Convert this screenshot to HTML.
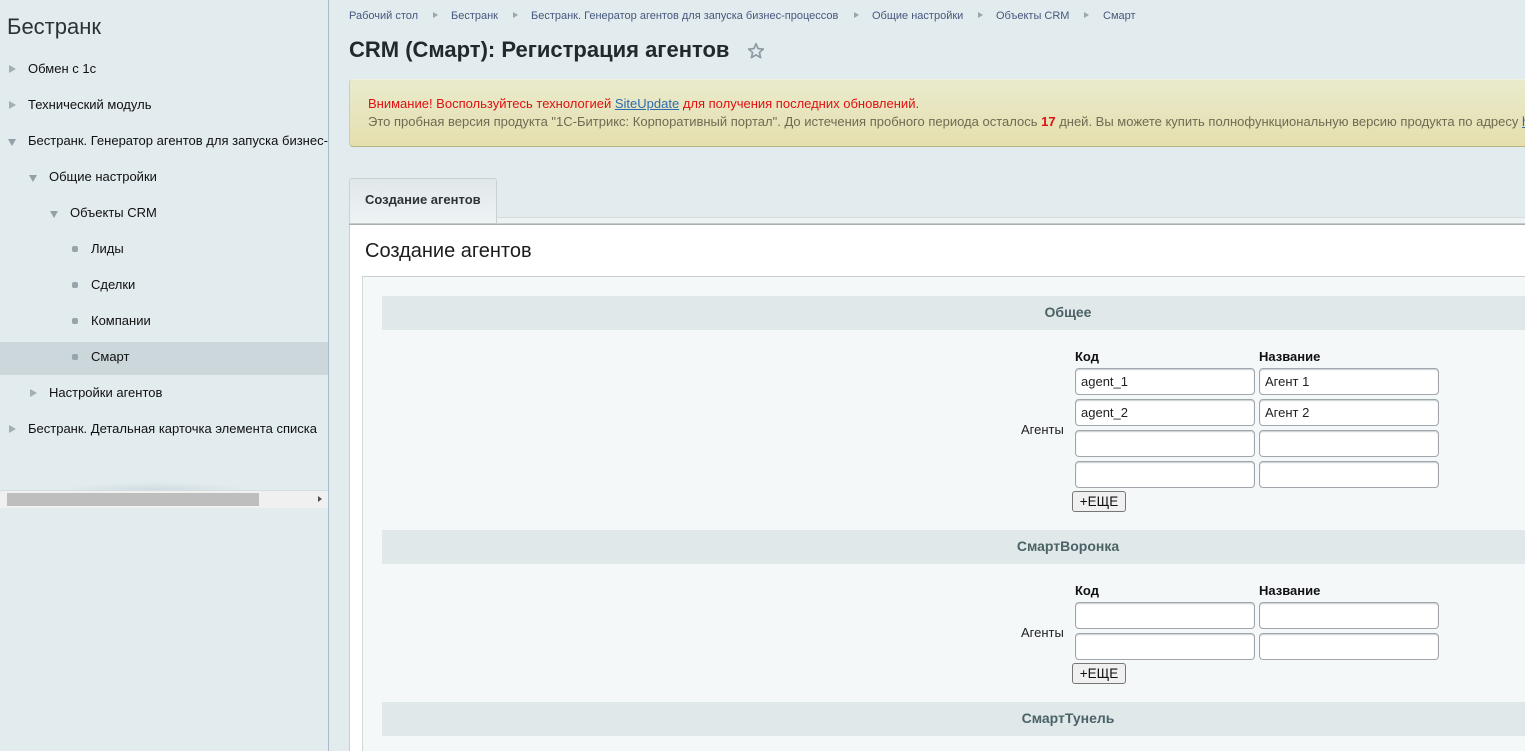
<!DOCTYPE html>
<html lang="ru"><head><meta charset="utf-8"><title>CRM (Смарт): Регистрация агентов</title>
<style>
html,body{margin:0;padding:0;width:1525px;height:751px;overflow:hidden;background:#e2ebee;font-family:"Liberation Sans","Noto Sans CJK SC",sans-serif;color:#000}
.a{position:absolute;white-space:nowrap}
#root{position:relative;width:1525px;height:751px;overflow:hidden}
.m{font-size:13px;line-height:16px;color:#111}
.tr{position:absolute;width:0;height:0;border-left:7px solid #a3afb6;border-top:4px solid transparent;border-bottom:4px solid transparent}
.td{position:absolute;width:0;height:0;border-top:7px solid #93a0a8;border-left:4.5px solid transparent;border-right:4.5px solid transparent}
.dot{position:absolute;width:6px;height:6px;border-radius:2px;background:#98a4ac}
.bc{font-size:11px;line-height:14px;color:#46587e;top:9px}
.sep{position:absolute;top:12px;width:0;height:0;border-left:5px solid #9aa7af;border-top:3.5px solid transparent;border-bottom:3.5px solid transparent}
.band{position:absolute;left:382px;width:1143px;height:34px;background:#e0e8e9;text-align:center;font-size:14px;font-weight:bold;line-height:33px;color:#4b6267}
.band span{position:absolute;left:0;width:1372px}
.in{position:absolute;box-sizing:border-box;width:180px;height:27px;background:#fff;border:1px solid #a0a6ab;border-radius:4px;box-shadow:inset 0 1px 1px #c8ced2;font-size:13px;line-height:25px;padding-left:5px;color:#222;white-space:nowrap}
.c1{left:1075px}.c2{left:1259px}
.h{font-size:13px;font-weight:bold;line-height:16px;color:#111}
.lb{font-size:13px;line-height:16px;color:#222}
.btn{position:absolute;box-sizing:border-box;left:1072px;width:54px;height:21px;background:#f0f0f0;border:1px solid #767676;border-radius:3px;font-size:13.5px;line-height:19px;text-align:center;color:#111}
</style></head><body><div id="root">

<div class="a" style="left:0;top:0;width:328px;height:751px;background:#e2ebee"></div>
<div class="a" style="left:328px;top:0;width:1px;height:751px;background:#a9bbc9"></div>
<div class="a" style="left:7px;top:14px;font-size:22px;line-height:26px;color:#2c3338">Бестранк</div>

<div class="tr" style="left:9px;top:65px"></div><div class="a m" style="left:28px;top:61px">Обмен с 1с</div>
<div class="tr" style="left:9px;top:101px"></div><div class="a m" style="left:28px;top:97px">Технический модуль</div>
<div class="td" style="left:8px;top:139px"></div><div class="a m" style="left:28px;top:133px;width:300px;overflow:hidden">Бестранк. Генератор агентов для запуска бизнес-процессов</div>
<div class="td" style="left:29px;top:175px"></div><div class="a m" style="left:49px;top:169px">Общие настройки</div>
<div class="td" style="left:50px;top:211px"></div><div class="a m" style="left:70px;top:205px">Объекты CRM</div>
<div class="dot" style="left:72px;top:246px"></div><div class="a m" style="left:91px;top:241px">Лиды</div>
<div class="dot" style="left:72px;top:282px"></div><div class="a m" style="left:91px;top:277px">Сделки</div>
<div class="dot" style="left:72px;top:318px"></div><div class="a m" style="left:91px;top:313px">Компании</div>
<div class="a" style="left:0;top:342px;width:328px;height:33px;background:#cbd7db"></div>
<div class="dot" style="left:72px;top:354px"></div><div class="a m" style="left:91px;top:349px">Смарт</div>
<div class="tr" style="left:30px;top:389px"></div><div class="a m" style="left:49px;top:385px">Настройки агентов</div>
<div class="tr" style="left:9px;top:425px"></div><div class="a m" style="left:28px;top:421px">Бестранк. Детальная карточка элемента списка</div>

<div class="a" style="left:60px;top:482px;width:190px;height:8px;background:radial-gradient(ellipse at 50% 100%,#d0dce3 0,rgba(208,220,227,0) 70%)"></div>
<div class="a" style="left:0;top:490px;width:328px;height:18px;background:#f0f0f0;border-top:1px solid #d5dde1;box-sizing:border-box"></div>
<div class="a" style="left:7px;top:493px;width:252px;height:13px;background:#bebebe"></div>
<div class="a" style="left:318px;top:496px;width:0;height:0;border-left:4px solid #505050;border-top:3.5px solid transparent;border-bottom:3.5px solid transparent"></div>

<div class="a bc" style="left:349px">Рабочий стол</div><div class="sep" style="left:433px"></div>
<div class="a bc" style="left:451px">Бестранк</div><div class="sep" style="left:513px"></div>
<div class="a bc" style="left:531px">Бестранк. Генератор агентов для запуска бизнес-процессов</div><div class="sep" style="left:854px"></div>
<div class="a bc" style="left:872px">Общие настройки</div><div class="sep" style="left:978px"></div>
<div class="a bc" style="left:996px">Объекты CRM</div><div class="sep" style="left:1084px"></div>
<div class="a bc" style="left:1103px">Смарт</div>

<div class="a" style="left:349px;top:37px;font-size:22px;font-weight:bold;line-height:26px;color:#20292e">CRM (Смарт): Регистрация агентов</div>
<svg class="a" style="left:747px;top:42px" width="18" height="18" viewBox="0 0 18 18"><path d="M9 1.8l2.1 4.8 5.2.5-3.9 3.4 1.2 5.1L9 12.9l-4.6 2.7 1.2-5.1-3.9-3.4 5.2-.5z" fill="none" stroke="#8d9ba5" stroke-width="1.7" stroke-linejoin="round"/></svg>

<div class="a" style="left:349px;top:79px;width:1190px;height:68px;box-sizing:border-box;background:linear-gradient(#e9ebcd,#e5dfae);border:1px solid #cfcdaa;border-top-color:#f0f0e0;border-bottom-color:#b9b486;border-radius:4px"></div>
<div class="a" style="left:368px;top:96px;font-size:13px;line-height:16px;color:#e01010">Внимание! Воспользуйтесь технологией <span style="color:#2c6bb0;text-decoration:underline">SiteUpdate</span> для получения последних обновлений.</div>
<div class="a" style="left:368px;top:113px;font-size:13px;line-height:18px;color:#6f6b52;width:1157px;overflow:hidden">Это пробная версия продукта "1С-Битрикс: Корпоративный портал". До истечения пробного периода осталось <b style="color:#e01010">17</b> дней. Вы можете купить полнофункциональную версию продукта по адресу <span style="color:#2c6bb0;text-decoration:underline">https://www.1c-bitrix.ru</span></div>

<div class="a" style="left:349px;top:217px;width:1176px;height:7px;background:#edf2f3;border-top:1px solid #d5dcde;box-sizing:border-box"></div>
<div class="a" style="left:349px;top:178px;width:148px;height:45px;box-sizing:border-box;background:linear-gradient(#e1e8ea,#eef3f4);border:1px solid #c9d1d4;border-bottom:0;border-radius:3px 3px 0 0"></div>
<div class="a" style="left:349px;top:223px;width:1176px;height:1px;background:#c4ccce"></div>
<div class="a" style="left:349px;top:224px;width:1176px;height:1px;background:#a8b0b3"></div>
<div class="a" style="left:365px;top:192px;font-size:13px;font-weight:bold;line-height:16px;color:#2b3438">Создание агентов</div>

<div class="a" style="left:349px;top:225px;width:1176px;height:526px;background:#fff;border-left:1px solid #c6ced1"></div>
<div class="a" style="left:365px;top:239px;font-size:20px;line-height:24px;color:#1c1c1c">Создание агентов</div>
<div class="a" style="left:362px;top:276px;width:1163px;height:475px;box-sizing:border-box;background:#f5f8f9;border-left:1px solid #d3dadc;border-top:1px solid #c9d0d2"></div>

<div class="band" style="top:296px"><span>Общее</span></div>
<div class="a h" style="left:1075px;top:349px">Код</div><div class="a h" style="left:1259px;top:349px">Название</div>
<div class="in c1" style="top:368px">agent_1</div><div class="in c2" style="top:368px">Агент 1</div>
<div class="in c1" style="top:399px">agent_2</div><div class="in c2" style="top:399px">Агент 2</div>
<div class="in c1" style="top:430px"></div><div class="in c2" style="top:430px"></div>
<div class="in c1" style="top:461px"></div><div class="in c2" style="top:461px"></div>
<div class="a lb" style="left:1021px;top:422px">Агенты</div>
<div class="btn" style="top:491px">+ЕЩЕ</div>

<div class="band" style="top:530px"><span>СмартВоронка</span></div>
<div class="a h" style="left:1075px;top:583px">Код</div><div class="a h" style="left:1259px;top:583px">Название</div>
<div class="in c1" style="top:602px"></div><div class="in c2" style="top:602px"></div>
<div class="in c1" style="top:633px"></div><div class="in c2" style="top:633px"></div>
<div class="a lb" style="left:1021px;top:625px">Агенты</div>
<div class="btn" style="top:663px">+ЕЩЕ</div>

<div class="band" style="top:702px"><span>СмартТунель</span></div>

</div></body></html>
